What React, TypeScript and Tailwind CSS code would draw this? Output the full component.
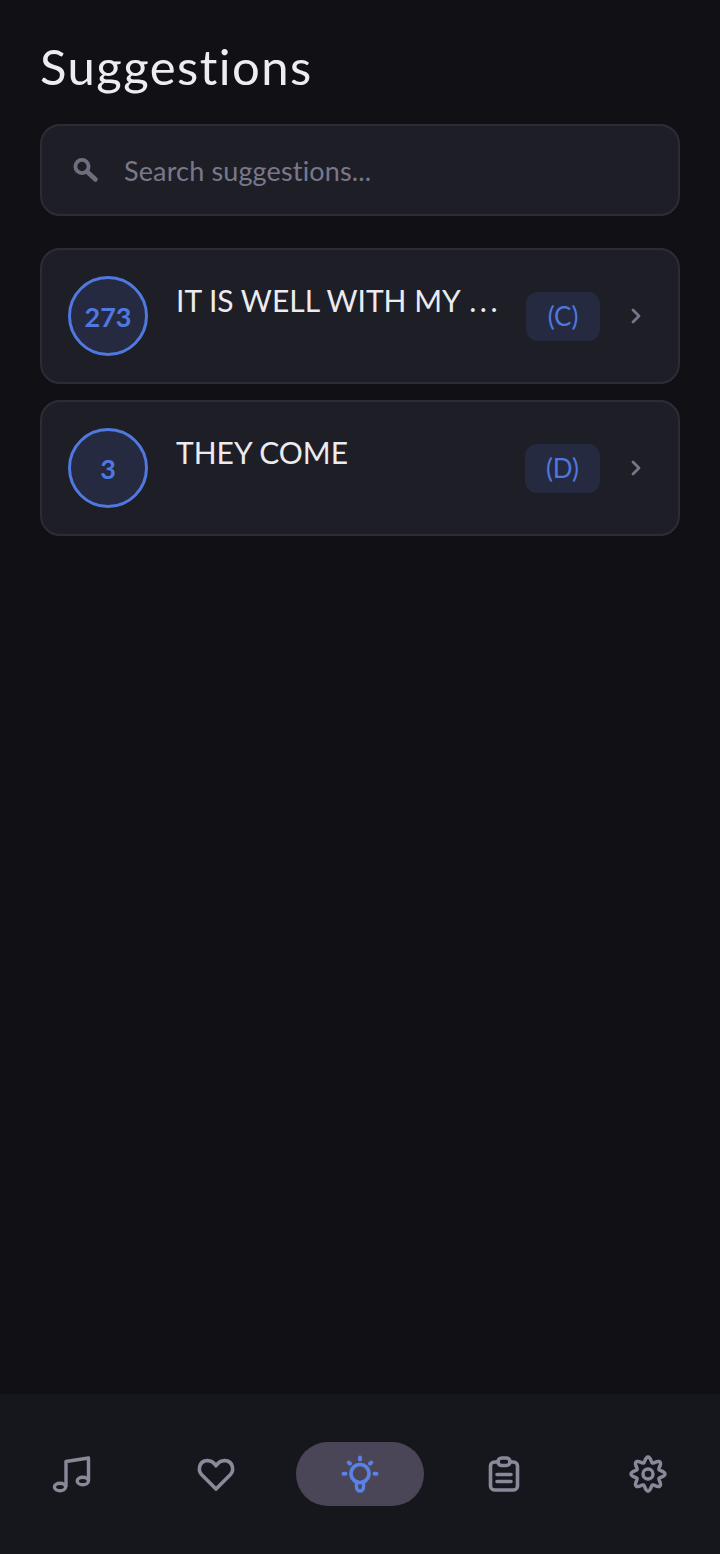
interface Suggestion {
  number: string;
  title: string;
  ellipsis?: boolean;
  songKey: string;
  badgeWidth: string;
}

const suggestions: Suggestion[] = [
  { number: "273", title: "IT IS WELL WITH MY ", ellipsis: true, songKey: "(C)", badgeWidth: "w-[74px]" },
  { number: "3", title: "THEY COME", songKey: "(D)", badgeWidth: "w-[75px]" },
];

// eight soft lobes round the gear, sampled as a closed line
const gearPath =
  Array.from({ length: 120 }, (_, i) => {
    const angle = (i / 120) * Math.PI * 2;
    const radius = 14.4 + 2.6 * Math.cos(8 * angle);
    const x = 20 + radius * Math.sin(angle);
    const y = 20 - radius * Math.cos(angle);
    return `${i === 0 ? "M" : "L"}${x.toFixed(2)} ${y.toFixed(2)}`;
  }).join(" ") + " Z";

function SearchIcon() {
  return (
    <svg width="28" height="28" viewBox="0 0 28 28" fill="none" stroke="#6f6e7f" strokeLinecap="round">
      <circle cx="10" cy="10.5" r="6.6" strokeWidth="3.8" />
      <path d="M16 16.5 L23.5 23.5" strokeWidth="4.6" />
    </svg>
  );
}

function Chevron() {
  return (
    <svg width="24" height="24" viewBox="0 0 24 24" fill="none" stroke="#77768a" strokeWidth="2.8" strokeLinecap="round" strokeLinejoin="round">
      <path d="M9 6 L15 12 L9 18" />
    </svg>
  );
}

function MusicIcon() {
  return (
    <svg width="40" height="40" viewBox="0 0 40 40" fill="none" stroke="#8a8999" strokeWidth="3.4" strokeLinejoin="round">
      <path d="M14 33 V7.5 L36.5 4 V27" />
      <ellipse cx="8" cy="33" rx="5.6" ry="3.8" />
      <ellipse cx="30.8" cy="27" rx="5.6" ry="3.8" />
    </svg>
  );
}

function HeartIcon() {
  return (
    <svg width="40" height="40" viewBox="0 0 40 40" fill="none" stroke="#8a8999" strokeWidth="3.6" strokeLinejoin="round">
      <path d="M20 35 L5.5 20.5 C1.5 16 3.2 7 11 6.6 C15 6.4 18 8.6 20 11.8 C22 8.6 25 6.4 29 6.6 C36.8 7 38.5 16 34.5 20.5 Z" />
    </svg>
  );
}

function BulbIcon() {
  return (
    <svg width="40" height="40" viewBox="0 0 40 40" fill="none" stroke="#5a82e6" strokeLinecap="round">
      <circle cx="20" cy="19.5" r="9" strokeWidth="3.6" />
      <path d="M16.5 28 V33.5 A3.5 3.5 0 0 0 23.5 33.5 V28" strokeWidth="3.4" />
      <path d="M20 3.5 V5.5 M8.8 8.5 L10 9.7 M31.2 8.5 L30 9.7 M3.5 19.7 H5.5 M34.5 19.7 H36.5" strokeWidth="4" />
    </svg>
  );
}

function ClipboardIcon() {
  return (
    <svg width="40" height="40" viewBox="0 0 40 40" fill="none" stroke="#8a8999" strokeWidth="3.6" strokeLinecap="round" strokeLinejoin="round">
      <path d="M14 8 H10.5 A4 4 0 0 0 6.5 12 V32 A4 4 0 0 0 10.5 36 H29.5 A4 4 0 0 0 33.5 32 V12 A4 4 0 0 0 29.5 8 H26" />
      <rect x="14" y="4" width="12" height="7.5" rx="3.7" />
      <path d="M13 20.5 H27 M13 27.5 H27" />
    </svg>
  );
}

function GearIcon() {
  return (
    <svg width="40" height="40" viewBox="0 0 40 40" fill="none" stroke="#8a8999" strokeWidth="3.4" strokeLinejoin="round">
      <path d={gearPath} />
      <circle cx="20" cy="20" r="5" />
    </svg>
  );
}

export default function App() {
  return (
    <div className="flex h-[1554px] w-[720px] flex-col overflow-hidden bg-[#101015] font-['Lato',sans-serif] [font-variant-ligatures:none]">
      <main className="flex-1 px-10 pt-[35px]">
        <h1 className="text-[49px] leading-[62px] font-normal tracking-[1.45px] text-[#ececf1]">Suggestions</h1>

        <div className="mt-[27px] flex h-[92px] items-center rounded-[20px] border-2 border-[#2c2c36] bg-[#1e1e27] pl-[30px]">
          <SearchIcon />
          <span className="ml-[24px] pt-0.5 text-[27px] tracking-[0.15px] text-[#79788a]">Search suggestions...</span>
        </div>

        <div className="mt-8 flex flex-col gap-4">
          {suggestions.map((item) => (
            <div
              key={item.number}
              className="flex h-[136px] items-center rounded-[20px] border-2 border-[#2c2c36] bg-[#1e1e27] pr-[30px] pl-[26px]"
            >
              <div className="flex h-20 w-20 shrink-0 items-center justify-center rounded-full border-[3px] border-[#5079e0] bg-[#252a41] pt-0.5 text-[27px] font-bold text-[#5079e0]">
                {item.number}
              </div>
              <div className="ml-7 h-20 min-w-0 flex-1">
                <p className="text-[30px] leading-[48px] whitespace-pre text-[#ebebf0]">
                  {item.title}
                  {item.ellipsis && <span className="ml-[2px] tracking-[3.5px]">...</span>}
                </p>
              </div>
              <div
                className={`flex h-[49px] ${item.badgeWidth} shrink-0 items-center justify-center rounded-xl bg-[#252a41] text-[26px] text-[#4f78de]`}
              >
                {item.songKey}
              </div>
              <div className="ml-6 flex w-6 shrink-0 justify-center">
                <Chevron />
              </div>
            </div>
          ))}
        </div>
      </main>

      <nav className="grid h-[160px] grid-cols-5 bg-[#16171d] pt-[48px]">
        <div className="flex h-16 items-center justify-center">
          <MusicIcon />
        </div>
        <div className="flex h-16 items-center justify-center">
          <HeartIcon />
        </div>
        <div className="flex h-16 items-center justify-center">
          <div className="flex h-16 w-32 shrink-0 items-center justify-center rounded-[32px] bg-[#4a4658]">
            <BulbIcon />
          </div>
        </div>
        <div className="flex h-16 items-center justify-center">
          <ClipboardIcon />
        </div>
        <div className="flex h-16 items-center justify-center">
          <GearIcon />
        </div>
      </nav>
    </div>
  );
}
